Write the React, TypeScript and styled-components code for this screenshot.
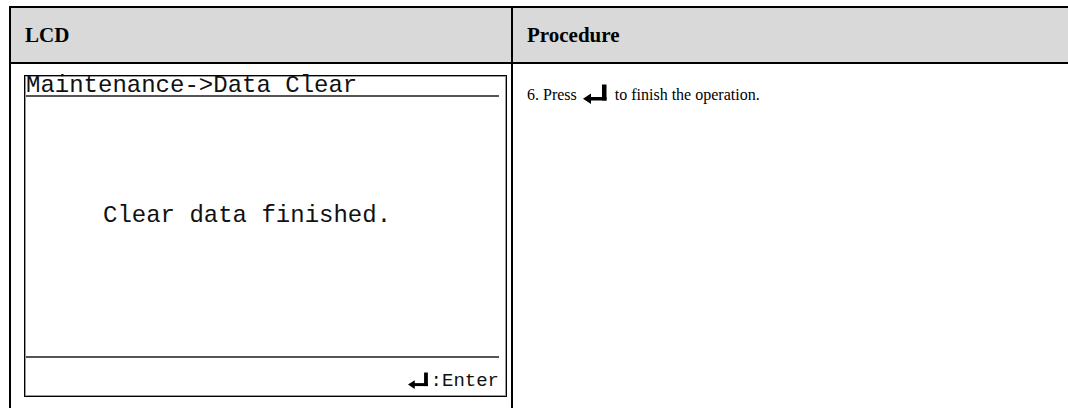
import React from "react";
import styled, { createGlobalStyle } from "styled-components";

const GlobalStyle = createGlobalStyle`
  html, body {
    margin: 0;
    padding: 0;
    background: #ffffff;
    overflow: hidden;
  }
  body {
    font-family: "Liberation Serif", "Times New Roman", serif;
    color: #000;
  }
`;

const Page = styled.div`
  width: 1068px;
  height: 408px;
  padding: 6px 0 0 9px;
  box-sizing: border-box;
  overflow: hidden;
`;

const Table = styled.table`
  border-collapse: collapse;
  width: 1090px;
  table-layout: fixed;
`;

const HeadCell = styled.th<{ $w?: number }>`
  width: ${(p) => (p.$w ? `${p.$w}px` : "auto")};
  height: 54px;
  background: #d9d9d9;
  border: 2px solid #000;
  text-align: left;
  vertical-align: middle;
  padding: 0 0 0 14px;
  font-size: 21px;
  font-weight: bold;
`;

const BodyCell = styled.td<{ $pad: string }>`
  border: 2px solid #000;
  vertical-align: top;
  padding: ${(p) => p.$pad};
  height: 400px;
`;

const Lcd = styled.div`
  width: 483px;
  height: 322px;
  box-sizing: border-box;
  border: 1px solid #000;
  box-shadow: inset 0 0 0 1px #9a9a9a;
  display: flex;
  flex-direction: column;
  font-family: "Liberation Mono", "Courier New", monospace;
  font-size: 24px;
  color: #111;
`;

const LcdTitle = styled.div`
  height: 18px;
  line-height: 18px;
  margin: 0 7px 0 1px;
  padding-top: 1px;
  border-bottom: 2px solid #555;
  white-space: pre;
`;

const LcdBody = styled.div`
  flex: 1;
  display: flex;
  align-items: center;
  padding: 0 0 22px 78px;
  white-space: pre;
`;

const LcdFooter = styled.div`
  height: 31px;
  margin: 0 7px 0 1px;
  border-top: 2px solid #555;
  display: flex;
  justify-content: flex-end;
  align-items: center;
  gap: 1px;
  font-size: 19px;
  line-height: 24px;
  padding-top: 7px;
`;

const Step = styled.p`
  margin: 0;
  font-size: 16px;
  line-height: 20px;
  display: flex;
  align-items: flex-end;
  gap: 6px;
`;

function EnterIcon({ w, h }: { w: number; h: number }) {
  return (
    <svg width={w} height={h} viewBox="0 0 26 20" aria-hidden="true">
      <rect x="19" y="0" width="4.5" height="16" fill="#000" />
      <rect x="7" y="12.5" width="16.5" height="3.5" fill="#000" />
      <polygon points="0,14.25 8,9 8,19.5" fill="#000" />
    </svg>
  );
}

export default function App() {
  return (
    <Page>
      <GlobalStyle />
      <Table>
        <thead>
          <tr>
            <HeadCell $w={486}>LCD</HeadCell>
            <HeadCell>Procedure</HeadCell>
          </tr>
        </thead>
        <tbody>
          <tr>
            <BodyCell $pad="11px 4px 0 13px">
              <Lcd>
                <LcdTitle>Maintenance-&gt;Data Clear</LcdTitle>
                <LcdBody>Clear data finished.</LcdBody>
                <LcdFooter>
                  <EnterIcon w={22} h={18} />
                  <span>:Enter</span>
                </LcdFooter>
              </Lcd>
            </BodyCell>
            <BodyCell $pad="20px 14px 0 14px">
              <Step>
                <span>6. Press</span>
                <EnterIcon w={26} h={21} />
                <span>to finish the operation.</span>
              </Step>
            </BodyCell>
          </tr>
        </tbody>
      </Table>
    </Page>
  );
}
